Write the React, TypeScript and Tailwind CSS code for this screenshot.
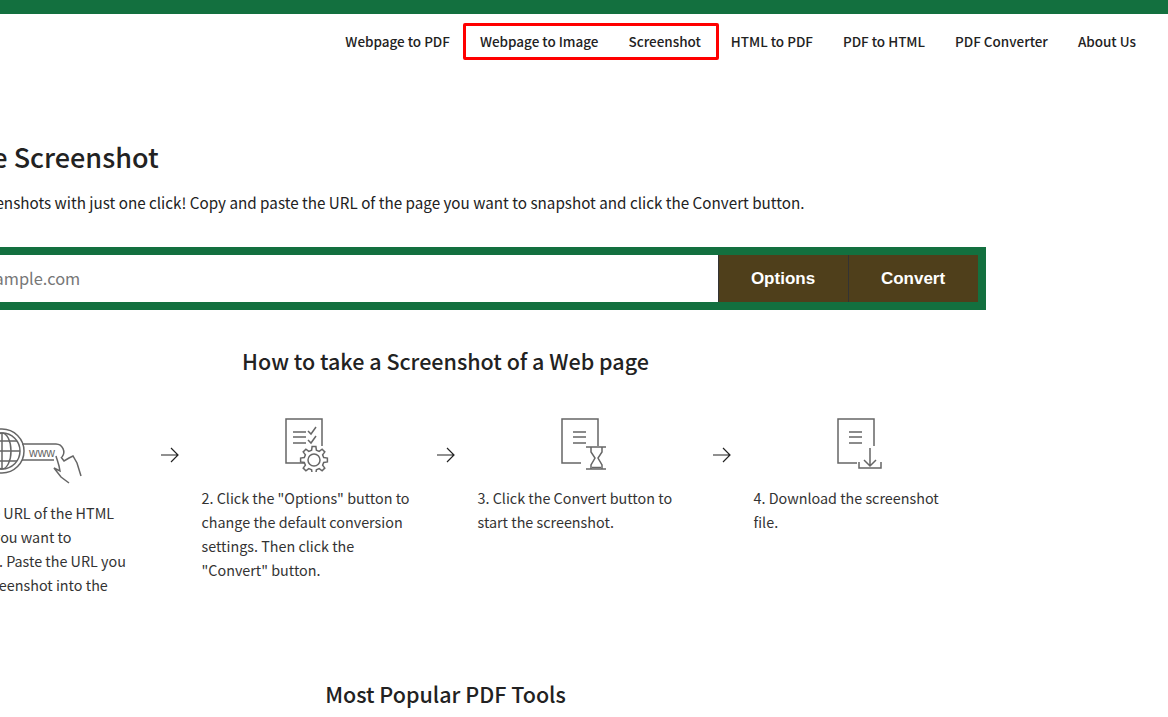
const navBefore = ["Webpage to PDF"];
const navBoxed = ["Webpage to Image", "Screenshot"];
const navAfter = ["HTML to PDF", "PDF to HTML", "PDF Converter", "About Us"];

function gearPoints(cx: number, cy: number) {
  const pts: string[] = [];
  const teeth = 8;
  for (let i = 0; i < teeth; i++) {
    const a = (i / teeth) * Math.PI * 2;
    const step = Math.PI / teeth;
    const add = (r: number, t: number) =>
      pts.push(`${(cx + r * Math.cos(t)).toFixed(1)},${(cy + r * Math.sin(t)).toFixed(1)}`);
    add(10, a - step * 0.62);
    add(13.5, a - step * 0.36);
    add(13.5, a + step * 0.36);
    add(10, a + step * 0.62);
  }
  return pts.join(" ");
}

function DocLines() {
  return (
    <>
      <path d="M39 30V3H3V47H22" />
      <path d="M14 16H27M14 21H27M14 27H27" />
    </>
  );
}

function UrlIcon() {
  return (
    <svg width="110" height="60" viewBox="0 0 110 60" fill="none" stroke="#666" strokeWidth="1.5" className="mt-[11px]">
      <circle cx="25" cy="24" r="22" />
      <circle cx="25" cy="24" r="18" />
      <ellipse cx="25" cy="24" rx="9" ry="18" />
      <path d="M25 6V42M7 24H43M10 14H40M10 34H40" />
      <path d="M45 17H79a8 8 0 0 1 6 13M45 33H77" />
      <text x="52" y="30" fontSize="12" fontFamily="Liberation Sans, sans-serif" fill="#666" stroke="none">www</text>
      <path d="M79 29C80 33 82 37 83 44L77 41L84 50L92 56M84 30L87 34L92 31L96 29L100 36L104 49" />
    </svg>
  );
}

function OptionsIcon() {
  return (
    <svg width="50" height="56" viewBox="0 0 50 56" fill="none" stroke="#666" strokeWidth="1.5">
      <path d="M39 30V3H3V47H22" />
      <path d="M10 16H23M10 21H23M10 27H23" />
      <path d="M25 15l3 3 5-7M25 24l3 3 5-7" />
      <polygon points={gearPoints(31, 44)} fill="#fff" />
      <circle cx="31" cy="44" r="6" />
    </svg>
  );
}

function ConvertIcon() {
  return (
    <svg width="50" height="56" viewBox="0 0 50 56" fill="none" stroke="#666" strokeWidth="1.5">
      <DocLines />
      <path d="M27 31H47M27 53H47" />
      <path d="M32 31V36L36 42L32 49V53M43 31V36L39 42L43 49V53" />
      <path d="M33 51.5H42" />
    </svg>
  );
}

function DownloadIcon() {
  return (
    <svg width="50" height="56" viewBox="0 0 50 56" fill="none" stroke="#666" strokeWidth="1.5">
      <DocLines />
      <path d="M35 32V50M29 44l6 6 6-6" />
      <path d="M24 46V52H46V46" />
    </svg>
  );
}

function Arrow() {
  return (
    <svg width="18" height="16" viewBox="0 0 18 16" fill="none" stroke="#222" strokeWidth="1.2" className="mt-[31px] ml-[23px] mr-[23px] shrink-0">
      <path d="M0 8H17M10 1l7 7-7 7" />
    </svg>
  );
}

const steps = [
  { icon: <UrlIcon />, text: "1. Copy the URL of the HTML web page you want to screenshot. Paste the URL you want to screenshot into the input box." },
  { icon: <OptionsIcon />, text: '2. Click the "Options" button to change the default conversion settings. Then click the "Convert" button.' },
  { icon: <ConvertIcon />, text: "3. Click the Convert button to start the screenshot." },
  { icon: <DownloadIcon />, text: "4. Download the screenshot file." },
];

export default function App() {
  return (
    <div className="h-[717px] overflow-hidden bg-white text-[#222] font-['Noto_Sans_CJK_KR','Noto_Sans',sans-serif]">
      <div className="h-[14px] bg-[#13703f]" />

      <nav className="flex justify-end gap-[30px] pr-[32px] pt-[18px] text-[13.47px] leading-[18px] font-medium">
        {navBefore.map((item) => (
          <a key={item}>{item}</a>
        ))}
        <div className="relative flex gap-[30px]">
          <div className="absolute -left-[17px] -right-[18px] -top-[9px] -bottom-[10px] rounded-[2px] border-3 border-[#f00]" />
          {navBoxed.map((item) => (
            <a key={item}>{item}</a>
          ))}
        </div>
        {navAfter.map((item) => (
          <a key={item}>{item}</a>
        ))}
      </nav>

      <main className="ml-[-95px] w-[1081px]">
        <h1 className="mt-[87px] text-[27px] leading-[40px] font-medium">Website Screenshot</h1>
        <p className="mt-[13px] pl-[25px] text-[15.22px] leading-[24px]">
          Take screenshots with just one click! Copy and paste the URL of the page you want to snapshot and click the Convert button.
        </p>

        <form className="mt-[33px] flex h-[63px] bg-[#13703f] p-[8px]">
          <div className="flex flex-1 items-center bg-white pl-[8px] text-[16.4px] text-[#777]">https://example.com</div>
          <button type="button" className="w-[130px] border-l border-[#333] bg-[#4f3f1b] pr-[1px] font-['Liberation_Sans',sans-serif] text-[17px] font-bold text-white">
            Options
          </button>
          <button type="button" className="w-[130px] border-l border-[#333] bg-[#4f3f1b] pr-[1px] font-['Liberation_Sans',sans-serif] text-[17px] font-bold text-white">
            Convert
          </button>
        </form>

        <h2 className="mt-[35px] text-center text-[21.5px] leading-[32px] font-medium">How to take a Screenshot of a Web page</h2>

        <div className="mt-[39px] flex items-start pl-[20.5px]">
          {steps.map((step, i) => (
            <div key={i} className="flex items-start">
              <div className="w-[212px]">
                <div className="flex justify-center">{step.icon}</div>
                <p className="mt-[14px] text-[14.35px] leading-[24px] text-[#333]">{step.text}</p>
              </div>
              {i < steps.length - 1 && <Arrow />}
            </div>
          ))}
        </div>

        <h2 className="mt-[57px] text-center text-[21.5px] leading-[32px] font-medium">Most Popular PDF Tools</h2>
      </main>
    </div>
  );
}
